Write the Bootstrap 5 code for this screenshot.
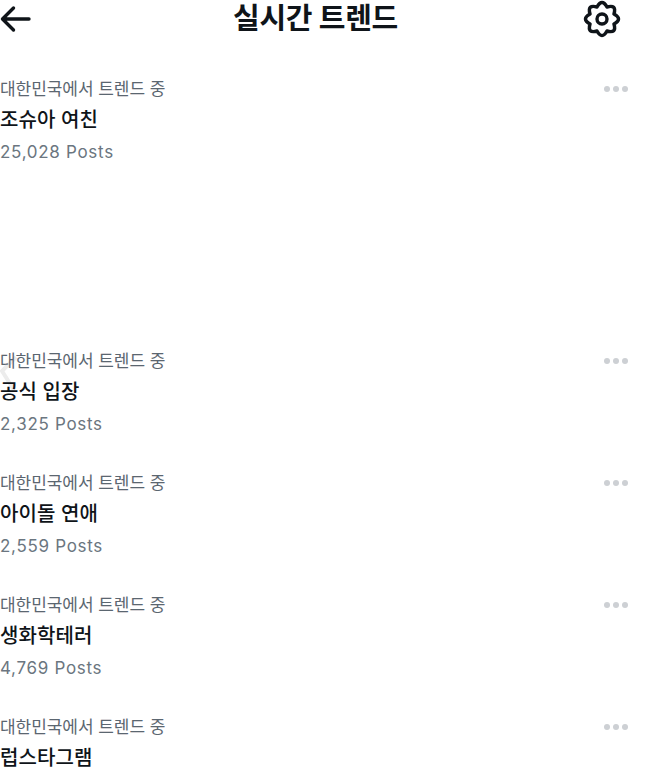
<!doctype html>
<html lang="ko">
<head>
<meta charset="utf-8">
<title>실시간 트렌드</title>
<link href="https://cdn.jsdelivr.net/npm/bootstrap@5.3.0/dist/css/bootstrap.min.css" rel="stylesheet">
<style>
html{background:#fff}
html,body{height:773px;overflow:hidden}
body{font-family:Inter,"Noto Sans CJK KR",sans-serif;color:#0f1419;background:transparent}
.top-bar{height:38px;padding-right:24px}
.top-bar h1{font-size:29px;line-height:38px;font-weight:700;margin:0 0 0 16px;letter-spacing:-.3px}
.top-bar svg{display:block}
.trend-list{padding-top:35px;padding-right:17px}
.trend-item{height:122px}
.trend-item.spaced{height:272px}
.trend-where{font-size:17px;line-height:32px;color:#5b6670;letter-spacing:-.05px}
.trend-name{font-size:20px;line-height:30px;font-weight:500;color:#0f1419;letter-spacing:.1px}
.trend-count{font-size:17px;line-height:35px;color:#6b7680;letter-spacing:.7px}
.more-dots{gap:3px;padding-top:13px}
.more-dots span{width:6px;height:6px;border-radius:50%;background:#cdd0d4}
.faint-mark{position:absolute;left:0;top:9px;z-index:-1}
</style>
</head>
<body>
<header class="top-bar d-flex align-items-center justify-content-between">
  <svg width="32" height="30" viewBox="0 0 32 30" aria-label="뒤로"><path d="M29 15H3M13.500 4 2.500 15 13.500 26" fill="none" stroke="#0f1419" stroke-width="3.400" stroke-linecap="round" stroke-linejoin="round"/></svg>
  <h1>실시간 트렌드</h1>
  <svg width="38" height="38" viewBox="0 0 38 38" aria-label="설정"><path d="M31 14Q40 19 31 24Q33.800 33.800 24 31Q19 40 14 31Q4.200 33.800 7 24Q-2 19 7 14Q4.200 4.200 14 7Q19 -2 24 7Q33.800 4.200 31 14Z" fill="none" stroke="#0f1419" stroke-width="3.500" stroke-linejoin="round"/><circle cx="19" cy="19" r="5" fill="none" stroke="#0f1419" stroke-width="3.400"/></svg>
</header>
<main class="trend-list">
  <section class="trend-item spaced d-flex justify-content-between align-items-start">
    <div><div class="trend-where">대한민국에서 트렌드 중</div><div class="trend-name">조슈아 여친</div><div class="trend-count">25,028 Posts</div></div>
    <div class="more-dots d-flex"><span></span><span></span><span></span></div>
  </section>
  <section class="trend-item d-flex justify-content-between align-items-start position-relative">
    <svg class="faint-mark" width="18" height="38" viewBox="0 0 18 38" aria-hidden="true"><path d="M16 3 2 17 14 36" fill="none" stroke="#ececec" stroke-width="4"/></svg>
    <div><div class="trend-where">대한민국에서 트렌드 중</div><div class="trend-name">공식 입장</div><div class="trend-count">2,325 Posts</div></div>
    <div class="more-dots d-flex"><span></span><span></span><span></span></div>
  </section>
  <section class="trend-item d-flex justify-content-between align-items-start">
    <div><div class="trend-where">대한민국에서 트렌드 중</div><div class="trend-name">아이돌 연애</div><div class="trend-count">2,559 Posts</div></div>
    <div class="more-dots d-flex"><span></span><span></span><span></span></div>
  </section>
  <section class="trend-item d-flex justify-content-between align-items-start">
    <div><div class="trend-where">대한민국에서 트렌드 중</div><div class="trend-name">생화학테러</div><div class="trend-count">4,769 Posts</div></div>
    <div class="more-dots d-flex"><span></span><span></span><span></span></div>
  </section>
  <section class="trend-item d-flex justify-content-between align-items-start">
    <div><div class="trend-where">대한민국에서 트렌드 중</div><div class="trend-name">럽스타그램</div></div>
    <div class="more-dots d-flex"><span></span><span></span><span></span></div>
  </section>
</main>
<script src="https://cdn.jsdelivr.net/npm/bootstrap@5.3.0/dist/js/bootstrap.bundle.min.js"></script>
</body>
</html>
